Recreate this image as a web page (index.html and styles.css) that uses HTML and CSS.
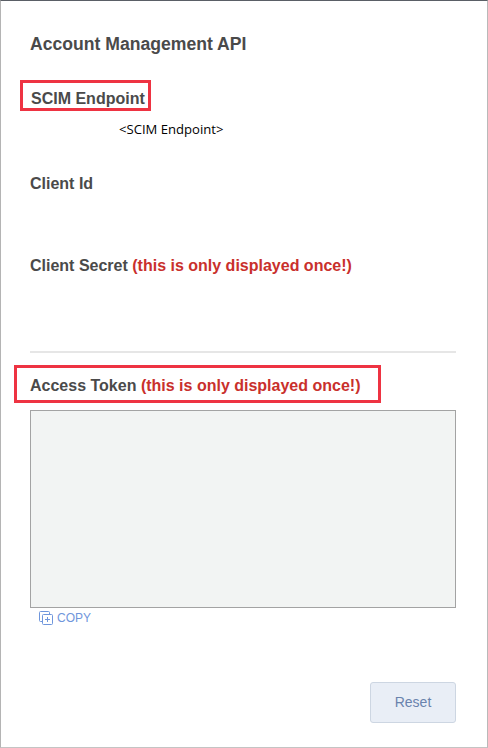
FILE: index.html
```html
<!DOCTYPE html>
<html lang="en">
<head>
  <meta charset="UTF-8">
  <title>Account Management API</title>
  <link rel="stylesheet" href="styles.css">
</head>
<body>

  <div class="panel">
    <h1>Account Management API</h1>

    <div class="field field-scim">
      <h2>SCIM Endpoint</h2>
      <span class="callout callout-scim"></span>
      <div class="value">&lt;SCIM Endpoint&gt;</div>
    </div>

    <div class="field field-client">
      <h2>Client Id</h2>
    </div>

    <div class="field field-secret">
      <h2>Client Secret <span class="warn">(this is only displayed once!)</span></h2>
    </div>

    <hr>

    <div class="field field-token">
      <h2>Access Token <span class="warn">(this is only displayed once!)</span></h2>
      <span class="callout callout-token"></span>
    </div>

    <div class="token-box"></div>

    <a class="copy" href="#">
      <svg width="14" height="14" viewBox="0 0 14 14" fill="none" stroke="#6f96dc" stroke-width="1">
        <path d="M3.5 10.5H1.5a1 1 0 0 1-1-1V1.500a1 1 0 0 1 1-1h8a1 1 0 0 1 1 1v2"/>
        <rect x="3.500" y="3.500" width="10" height="10" rx="1"/>
        <path d="M8.500 6v5M6 8.500h5"/>
      </svg>
      COPY
    </a>

    <div class="actions">
      <button>Reset</button>
    </div>
  </div>

</body>
</html>
```

FILE: styles.css
```css
* {
  box-sizing: border-box;
}
html, body {
  margin: 0;
  height: 100%;
}
body {
  font-family: "Liberation Sans", Arial, sans-serif;
  background: #fff;
}
.panel {
  height: 748px;
  padding: 34px 31px 0 29px;
  border: 1px solid #b9b9b9;
  border-top-color: #5a5f66;
  border-bottom-color: #c4c4c4;
  border-left-color: #b4b4b4;
}
h1 {
  margin: 0;
  font-size: 17.600px;
  line-height: 18px;
  color: #4a4a4a;
}
h2 {
  margin: 0;
  font-size: 16px;
  line-height: 18px;
  color: #4a4a4a;
}
.warn {
  color: #c9302c;
}
.field {
  position: relative;
}
.field-scim {
  margin-top: 37px;
  height: 82px;
}
.field-scim h2 {
  padding-left: 1px;
}
.value {
  margin-top: 13px;
  padding-left: 89px;
  font-family: "Open Sans", sans-serif;
  font-size: 13.100px;
  line-height: 16px;
  color: #000;
}
.field-client {
  margin-top: 3px;
}
.field-secret {
  margin-top: 64px;
}
hr {
  margin: 76px 0 0;
  border: none;
  border-top: 2px solid #e6e6e6;
}
.field-token {
  margin-top: 24px;
}
.callout {
  position: absolute;
  border: 3px solid #ee3342;
}
.callout-scim {
  left: -10px;
  top: -10px;
  width: 131px;
  height: 31px;
}
.callout-token {
  left: -16px;
  top: -12px;
  width: 367px;
  height: 38px;
}
.token-box {
  height: 198px;
  margin-top: 15px;
  background: #f2f4f3;
  border: 1px solid #a3a3a3;
}
.copy {
  display: flex;
  align-items: center;
  gap: 4px;
  margin: 3px 0 0 9px;
  font-size: 12px;
  line-height: 14px;
  color: #6f96dc;
  text-decoration: none;
}
.actions {
  display: flex;
  justify-content: flex-end;
  margin-top: 57px;
}
button {
  width: 86px;
  height: 41px;
  padding: 0 0 2px;
  font-family: inherit;
  font-size: 14px;
  color: #6a83ad;
  background: #e9eef6;
  border: 1px solid #cdd6e2;
  border-radius: 3px;
}
```
